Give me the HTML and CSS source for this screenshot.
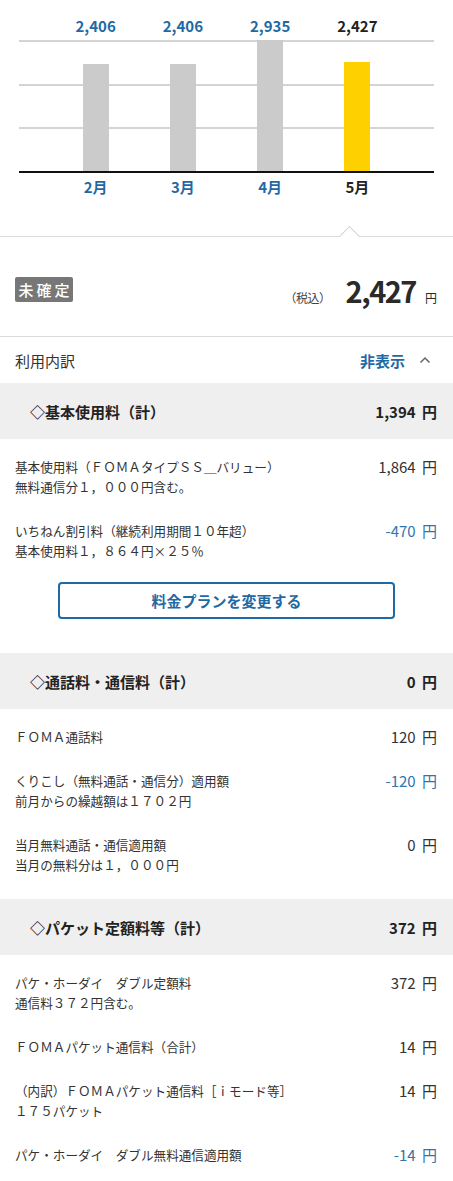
FILE: index.html
```html
<!DOCTYPE html>
<html lang="ja">
<head>
<meta charset="utf-8">
<title>利用内訳</title>
<link rel="stylesheet" href="styles.css">
</head>
<body>
<section class="chart">
  <div class="cols labels">
    <div class="col">2,406</div>
    <div class="col">2,406</div>
    <div class="col">2,935</div>
    <div class="col current">2,427</div>
  </div>
  <div class="plot">
    <div class="cols bars">
      <div class="col"><div class="bar" style="height:107px"></div></div>
      <div class="col"><div class="bar" style="height:107px"></div></div>
      <div class="col"><div class="bar" style="height:131px"></div></div>
      <div class="col"><div class="bar current" style="height:109px"></div></div>
    </div>
  </div>
  <div class="cols months">
    <div class="col">2月</div>
    <div class="col">3月</div>
    <div class="col">4月</div>
    <div class="col current">5月</div>
  </div>
</section>

<section class="summary">
  <span class="caret"></span>
  <span class="badge">未確定</span>
  <div class="total">
    <span class="tax">（税込）</span>
    <span class="big">2,427</span>
    <span class="yen">円</span>
  </div>
</section>

<div class="toggle">
  <span class="toggle-title">利用内訳</span>
  <span class="toggle-link">非表示
    <svg class="chev" width="12" height="8" viewBox="0 0 12 8"><polyline points="1.5,6.5 6,2 10.5,6.5" fill="none" stroke="#666" stroke-width="1.5"/></svg>
  </span>
</div>

<div class="head"><span>◇基本使用料（計）</span><span class="hv">1,394 円</span></div>
<div class="list">
  <div class="row"><div class="name">基本使用料（ＦＯＭＡタイプＳＳ＿バリュー）<br>無料通信分１，０００円含む。</div><div class="amt">1,864 円</div></div>
  <div class="row"><div class="name">いちねん割引料（継続利用期間１０年超）<br>基本使用料１，８６４円×２５％</div><div class="amt neg">-470 円</div></div>
</div>
<div class="btn-wrap"><a class="btn">料金プランを変更する</a></div>

<div class="head"><span>◇通話料・通信料（計）</span><span class="hv">0 円</span></div>
<div class="list">
  <div class="row"><div class="name">ＦＯＭＡ通話料</div><div class="amt">120 円</div></div>
  <div class="row"><div class="name">くりこし（無料通話・通信分）適用額<br>前月からの繰越額は１７０２円</div><div class="amt neg">-120 円</div></div>
  <div class="row"><div class="name">当月無料通話・通信適用額<br>当月の無料分は１，０００円</div><div class="amt">0 円</div></div>
</div>

<div class="head"><span>◇パケット定額料等（計）</span><span class="hv">372 円</span></div>
<div class="list">
  <div class="row"><div class="name">パケ・ホーダイ　ダブル定額料<br>通信料３７２円含む。</div><div class="amt">372 円</div></div>
  <div class="row"><div class="name">ＦＯＭＡパケット通信料（合計）</div><div class="amt">14 円</div></div>
  <div class="row"><div class="name">（内訳）ＦＯＭＡパケット通信料［ｉモード等］<br>１７５パケット</div><div class="amt">14 円</div></div>
  <div class="row"><div class="name">パケ・ホーダイ　ダブル無料通信適用額</div><div class="amt neg">-14 円</div></div>
</div>
</body>
</html>
```

FILE: styles.css
```css
* { box-sizing: border-box; }
html, body { margin: 0; padding: 0; background: #fff; }
body {
  font-family: "Noto Sans CJK JP", "Noto Sans", sans-serif;
  color: #333;
  width: 453px;
}

/* chart */
.chart { padding: 16px 19px 39px; }
.cols { display: grid; grid-template-columns: repeat(4, 1fr); padding: 0 33px; }
.col { text-align: center; }
.labels { height: 20px; line-height: 20px; font-size: 15px; font-weight: bold; color: #1f6aa5; margin-bottom: 4px; }
.labels .current, .months .current { color: #222; }
.plot {
  height: 133px;
  border-bottom: 2px solid #111;
  background-image:
    linear-gradient(#d4d4d4, #d4d4d4),
    linear-gradient(#d4d4d4, #d4d4d4),
    linear-gradient(#d4d4d4, #d4d4d4);
  background-size: 100% 2px;
  background-repeat: no-repeat;
  background-position: 0 0, 0 44px, 0 87px;
}
.bars { height: 100%; padding: 0 33px; }
.bars .col { display: flex; align-items: flex-end; justify-content: center; height: 100%; }
.bar { width: 26px; background: #cbcbcb; }
.bar.current { background: #ffd000; }
.months { margin-top: 4px; height: 20px; line-height: 20px; font-size: 15px; font-weight: bold; color: #1f6aa5; }

/* summary */
.summary {
  position: relative;
  display: flex;
  align-items: center;
  justify-content: space-between;
  border-top: 1px solid #dcdcdc;
  border-bottom: 1px solid #dcdcdc;
  height: 101px;
  padding: 6px 16px 0 15px;
}
.caret {
  position: absolute;
  left: 342px;
  top: -8px;
  width: 15px;
  height: 15px;
  background: #fff;
  border-top: 1px solid #d0d0d0;
  border-left: 1px solid #d0d0d0;
  transform: rotate(45deg);
}
.badge {
  display: inline-block;
  width: 58px;
  height: 25px;
  line-height: 25px;
  background: #777;
  color: #fff;
  font-size: 15px;
  font-weight: 500;
  text-align: center;
  letter-spacing: 3px;
  padding-left: 3px;
  border-radius: 2px;
}
.total { display: flex; align-items: baseline; color: #2a2a2a; }
.tax { font-size: 12px; color: #444; margin-right: 15px; letter-spacing: -0.5px; }
.big { font-size: 29px; font-weight: bold; line-height: 34px; letter-spacing: -1.5px; }
.yen { font-size: 12px; margin-left: 9px; }

/* toggle */
.toggle {
  display: flex;
  align-items: center;
  justify-content: space-between;
  height: 46px;
  padding: 0 22px 0 15px;
  font-size: 15px;
}
.toggle-link { color: #1f6aa5; font-weight: bold; display: flex; align-items: center; }
.chev { margin-left: 14px; }

/* sections */
.head {
  display: flex;
  align-items: center;
  justify-content: space-between;
  height: 56px;
  background: #efefef;
  padding: 0 16px 0 30px;
  font-size: 15px;
  font-weight: bold;
  color: #222;
}
.hv { word-spacing: 3px; }
.list { padding: 6px 0 12px; }
.list:has(+ .btn-wrap) { padding-bottom: 0; }
.row {
  display: flex;
  justify-content: space-between;
  align-items: flex-start;
  padding: 12px 16px 12px 15px;
  line-height: 20px;
}
.name { font-size: 12.6px; color: #333; }
.amt { font-size: 15px; color: #333; white-space: nowrap; word-spacing: 3px; }
.amt.neg { color: #2f75ab; }

.btn-wrap { padding: 9px 0 34px; display: flex; justify-content: center; }
.btn {
  display: flex;
  align-items: center;
  justify-content: center;
  width: 337px;
  height: 37px;
  border: 2px solid #1f6aa5;
  border-radius: 4px;
  color: #1f6aa5;
  font-size: 15px;
  font-weight: bold;
}
```
